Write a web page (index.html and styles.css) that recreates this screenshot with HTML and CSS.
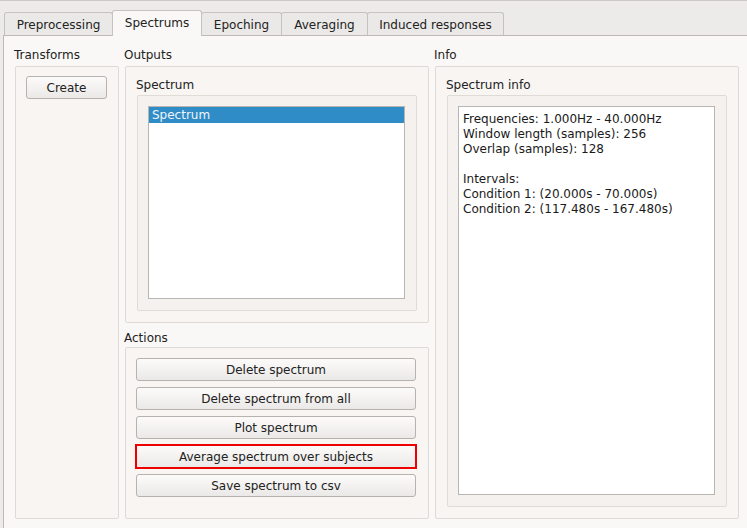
FILE: index.html
```html
<!DOCTYPE html>
<html>
<head>
<meta charset="utf-8">
<link rel="stylesheet" href="styles.css">
</head>
<body>
<div class="window">
  <div class="tabbar">
    <div class="tab tab-pre">Preprocessing</div>
    <div class="tab tab-spec selected">Spectrums</div>
    <div class="tab tab-epo">Epoching</div>
    <div class="tab tab-avg">Averaging</div>
    <div class="tab tab-ind">Induced responses</div>
  </div>
  <div class="pane">
    <div class="col">
      <div class="title">Transforms</div>
      <div class="group fill transforms">
        <button class="btn create">Create</button>
      </div>
    </div>
    <div class="col">
      <div class="title">Outputs</div>
      <div class="group outputs">
        <div class="subtitle">Spectrum</div>
        <div class="subgroup">
          <div class="list">
            <div class="item selected-item">Spectrum</div>
          </div>
        </div>
      </div>
      <div class="title actions-title">Actions</div>
      <div class="group fill actions">
        <button class="btn wide">Delete spectrum</button>
        <button class="btn wide">Delete spectrum from all</button>
        <button class="btn wide">Plot spectrum</button>
        <button class="btn wide highlighted">Average spectrum over subjects</button>
        <button class="btn wide">Save spectrum to csv</button>
      </div>
    </div>
    <div class="col">
      <div class="title">Info</div>
      <div class="group fill info">
        <div class="subtitle">Spectrum info</div>
        <div class="subgroup">
          <div class="textarea">Frequencies: 1.000Hz - 40.000Hz
Window length (samples): 256
Overlap (samples): 128

Intervals:
Condition 1: (20.000s - 70.000s)
Condition 2: (117.480s - 167.480s)</div>
        </div>
      </div>
    </div>
  </div>
</div>
</body>
</html>
```

FILE: styles.css
```css
html, body {
  margin: 0;
  padding: 0;
}
body {
  width: 747px;
  height: 528px;
  overflow: hidden;
  background: #edebe9;
  font-family: "DejaVu Sans", sans-serif;
  font-size: 12px;
  color: #222;
}
.window {
  height: 528px;
  box-sizing: border-box;
  border-top: 1px solid #cdc9c5;
  display: flex;
  flex-direction: column;
}
.tabbar {
  height: 34px;
  flex: none;
  display: flex;
  align-items: flex-end;
  padding-left: 4px;
}
.tab {
  box-sizing: border-box;
  height: 23px;
  padding: 5px 0 0;
  line-height: 15px;
  text-align: center;
  border: 1px solid #c6c2be;
  border-bottom: none;
  border-radius: 3px 3px 0 0;
  background: #ebe9e7;
  white-space: nowrap;
}
.tab + .tab {
  margin-left: -1px;
}
.tab-pre { width: 109px; }
.tab-spec { width: 90px; }
.tab-epo { width: 81px; }
.tab-avg { width: 87px; }
.tab-ind { width: 137px; }
.tab.selected {
  height: 26px;
  margin-bottom: -1px;
  background: #faf8f6;
  position: relative;
  z-index: 1;
}
.pane {
  flex: 1;
  margin-left: 3px;
  background: #faf8f6;
  border-left: 1px solid #bdb9b5;
  border-top: 1px solid #bdb9b5;
  display: grid;
  grid-template-columns: 105px 305px 305px;
  column-gap: 5px;
  padding: 12px 0 9px 10px;
  min-height: 0;
}
.col {
  display: flex;
  flex-direction: column;
  min-height: 0;
}
.title, .subtitle {
  line-height: 15px;
  height: 15px;
  white-space: nowrap;
}
.group {
  margin-top: 3px;
  margin-left: 1px;
  box-sizing: border-box;
  border: 1px solid #dedad6;
  border-radius: 2px;
  background: #f8f5f3;
}
.fill {
  flex: 1;
}
.transforms {
  padding: 9px 10px;
}
.outputs, .info {
  display: flex;
  flex-direction: column;
  padding: 11px 10px;
}
.outputs {
  height: 257px;
  flex: none;
}
.subgroup {
  flex: 1;
  margin: 2px 1px 0;
  border: 1px solid #dfdbd7;
  border-radius: 2px;
  background: #f4f1ee;
  padding: 10px 11px 11px 10px;
  display: flex;
  flex-direction: column;
}
.list, .textarea {
  flex: 1;
  background: #fff;
  border: 1px solid #b9b5b1;
}
.item {
  height: 15px;
  line-height: 15px;
  padding: 1px 0 0 3px;
}
.selected-item {
  background: #308cc6;
  color: #eef4fa;
}
.textarea {
  padding: 5px 4px 3px;
  line-height: 15px;
  white-space: pre;
  color: #1a1a1a;
}
.actions-title {
  margin-top: 8px;
}
.actions-title + .group {
  margin-top: 1px;
}
.actions {
  padding: 10px;
  display: flex;
  flex-direction: column;
  gap: 6px;
}
.btn {
  box-sizing: border-box;
  height: 23px;
  padding: 2px 0 0;
  font-family: "DejaVu Sans", sans-serif;
  font-size: 12px;
  line-height: 15px;
  color: #222;
  border: 1px solid #b6b2ae;
  border-radius: 3px;
  background: linear-gradient(#fcfbfa, #ebe9e7);
  text-align: center;
}
.create {
  width: 81px;
  display: block;
}
.wide {
  width: 280px;
}
.highlighted {
  outline: 2px solid #ee0000;
  outline-offset: -1px;
  border-radius: 0;
}
```
